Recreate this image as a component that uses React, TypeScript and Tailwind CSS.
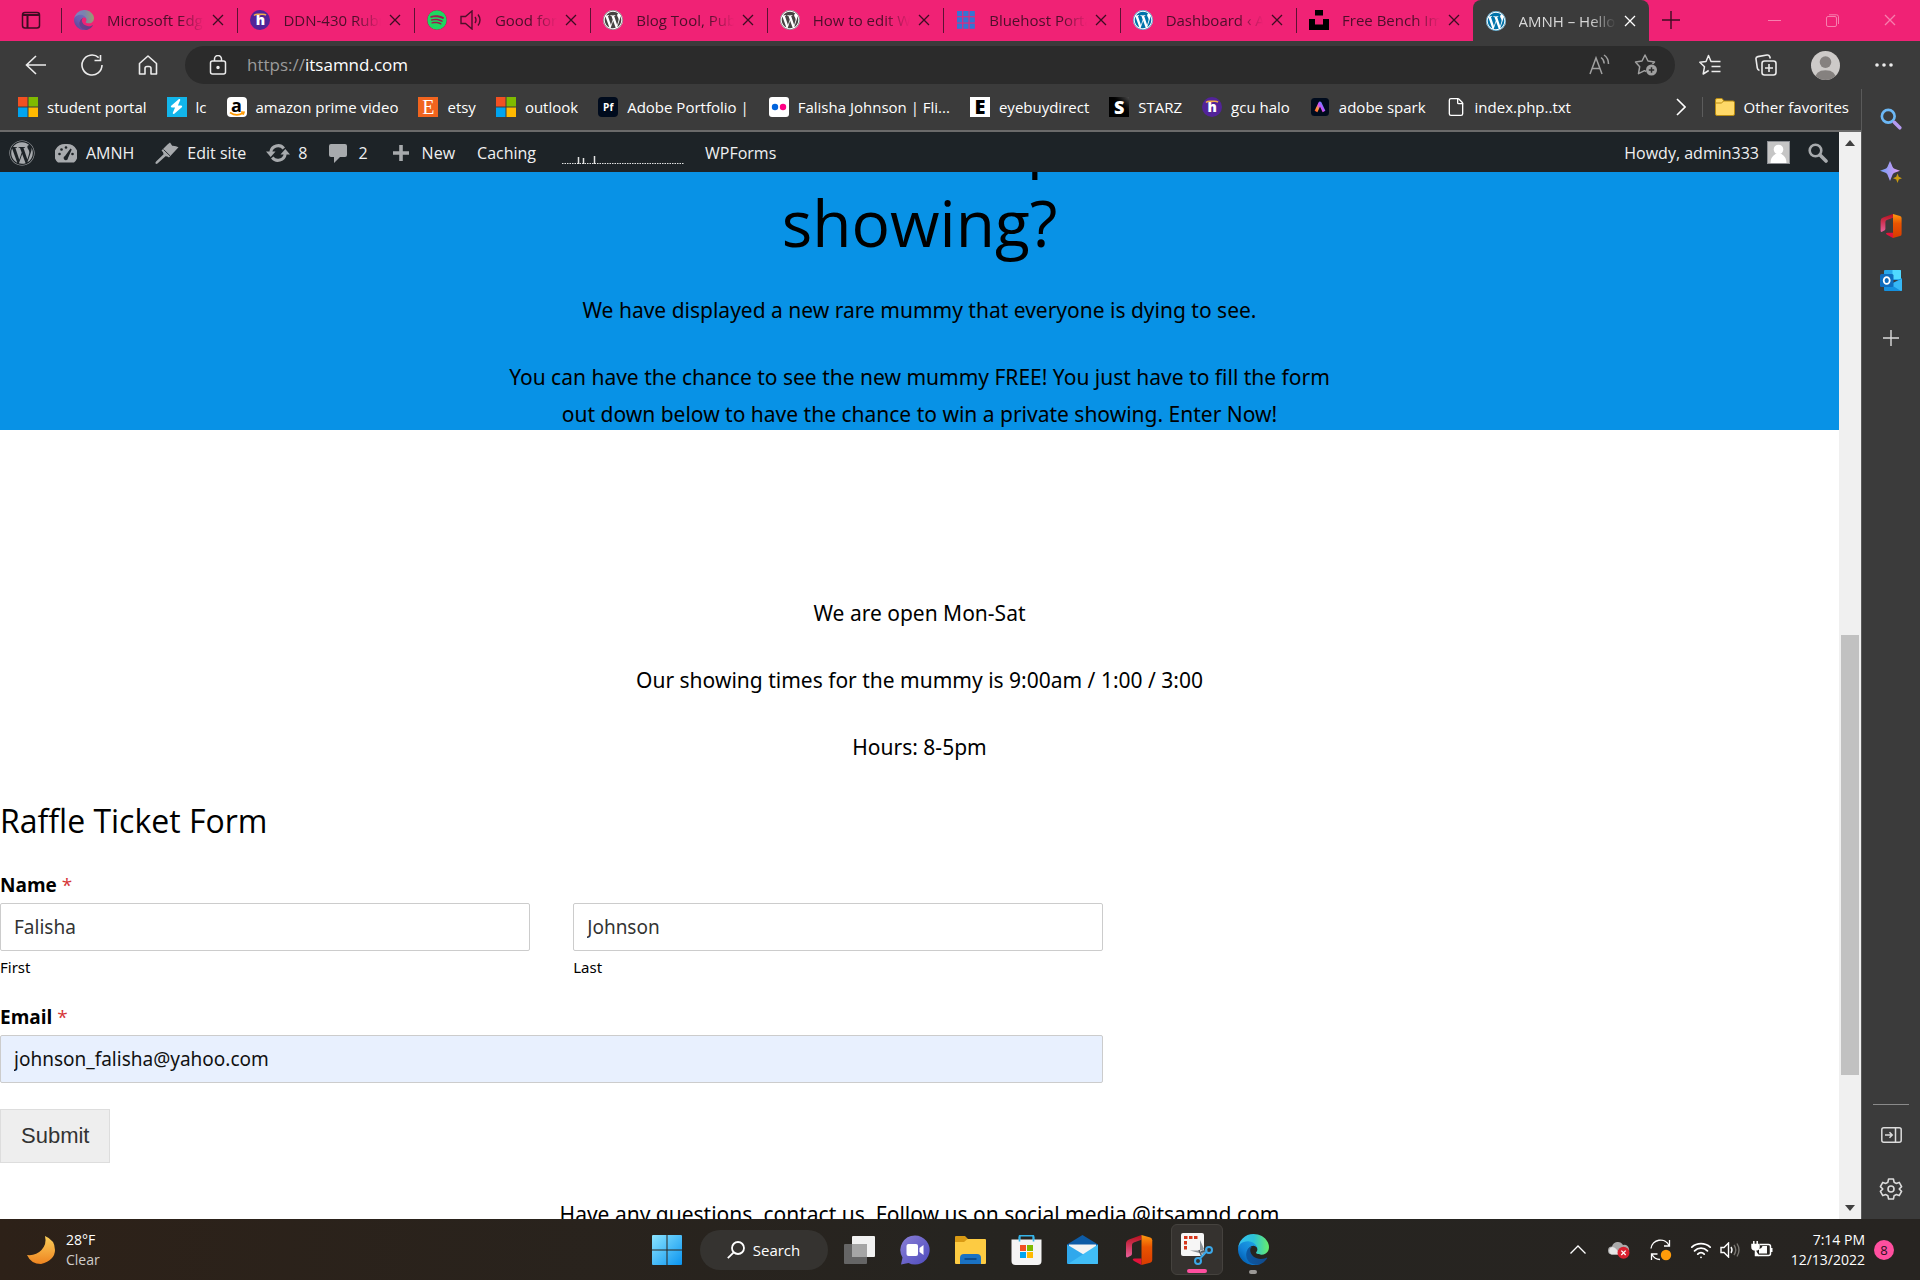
import React, { useState } from 'react';
import { FaWordpress, FaSpotify, FaBolt } from 'react-icons/fa6';
import { Wifi, File } from 'lucide-react';

interface SvgProps {
  className?: string;
}

const CloseIcon = ({ className = '' }: SvgProps) => (
  <svg viewBox="0 0 12 12" className={`w-3 h-3 ${className}`} fill="none" stroke="currentColor" strokeWidth="1.3">
    <path d="M1 1l10 10M11 1L1 11" />
  </svg>
);

const WordPressMark = ({ className = '' }: SvgProps) => (
  <span className={`flex items-center justify-center w-5 h-5 rounded-full bg-white ${className}`}>
    <FaWordpress size={20} />
  </span>
);

const HaloMark = () => (
  <span className="relative flex items-center justify-center w-5 h-5 rounded-full bg-[#522398] text-white text-sm leading-5 font-extrabold">
    h
    <svg viewBox="0 0 20 20" className="absolute inset-0 w-5 h-5" fill="none" stroke="#f0b04a" strokeWidth="1.6">
      <path d="M4 5.5C6 3.6 8 4.4 10 4.4s4-.8 6 .8" />
    </svg>
  </span>
);

const MicrosoftMark = () => (
  <svg viewBox="0 0 20 20" className="w-5 h-5">
    <path d="M0 0h9.5v9.5H0z" fill="#f25022" />
    <path d="M10.5 0H20v9.5h-9.5z" fill="#7fba00" />
    <path d="M0 10.5h9.5V20H0z" fill="#00a4ef" />
    <path d="M10.5 10.5H20V20h-9.5z" fill="#ffb900" />
  </svg>
);

const EdgeMark = ({ className = 'w-8 h-8' }: SvgProps) => (
  <svg viewBox="0 0 256 256" className={className}>
    <defs>
      <linearGradient id="edgeA" x1="60" y1="180" x2="240" y2="180" gradientUnits="userSpaceOnUse">
        <stop offset="0" stopColor="#0c59a4" />
        <stop offset="1" stopColor="#114a8b" />
      </linearGradient>
      <linearGradient id="edgeB" x1="150" y1="95" x2="45" y2="210" gradientUnits="userSpaceOnUse">
        <stop offset="0" stopColor="#1b9de2" />
        <stop offset=".6" stopColor="#1383d8" />
        <stop offset="1" stopColor="#0669bc" />
      </linearGradient>
      <linearGradient id="edgeC" x1="10" y1="90" x2="250" y2="90" gradientUnits="userSpaceOnUse">
        <stop offset="0" stopColor="#35c1f1" />
        <stop offset=".5" stopColor="#2cc2d8" />
        <stop offset="1" stopColor="#66eb6e" />
      </linearGradient>
    </defs>
    <path
      d="M235.7 195.5a93.7 93.7 0 01-10.6 4.7 101.9 101.9 0 01-35.9 6.4c-47.3 0-88.5-32.5-88.5-74.3a31.5 31.5 0 0116.4-27.3c-42.8 1.8-53.8 46.4-53.8 72.5 0 73.9 68.1 81.4 82.8 81.4 7.9 0 19.8-2.3 27-4.6l1.3-.4a128.3 128.3 0 0066.6-52.8 4 4 0 00-5.3-5.6z"
      fill="url(#edgeA)"
    />
    <path
      d="M105.7 241.4a79.2 79.2 0 01-22.7-21.3 80.7 80.7 0 0129.5-120c3.2-1.5 8.5-4.1 15.6-4a32.4 32.4 0 0125.7 13 31.9 31.9 0 016.3 18.7c0-.2 24.5-79.6-80-79.6-43.9 0-80 41.7-80 78.2a130.2 130.2 0 0012.1 56 128 128 0 00156.4 67 75.5 75.5 0 01-62.8-8z"
      fill="url(#edgeB)"
    />
    <path
      d="M152.3 148.9c-.9 1-3.4 2.5-3.4 5.6 0 2.6 1.7 5.2 4.8 7.3 14.3 10 41.4 8.6 41.5 8.6a59.6 59.6 0 0030.3-8.3 61.4 61.4 0 0030.4-52.9c.3-22.4-8-37.3-11.3-43.9C223.5 23.9 177.7 0 128 0A128 128 0 000 126.2c.5-36.5 36.8-66 80-66 3.5 0 23.5.3 42 10a72.6 72.6 0 0130.9 29.3c6.1 10.6 7.2 24.1 7.2 29.5s-2.7 13.3-7.8 19.9z"
      fill="url(#edgeC)"
    />
  </svg>
);

const OfficeMark = ({ className = 'w-6 h-7' }: SvgProps) => (
  <svg viewBox="0 0 22 24" className={className}>
    <defs>
      <linearGradient id="officeL" x1="0" y1="0" x2="0" y2="1">
        <stop offset="0" stopColor="#b80f1c" />
        <stop offset="1" stopColor="#e8609a" />
      </linearGradient>
      <linearGradient id="officeR" x1="0" y1="0" x2="0" y2="1">
        <stop offset="0" stopColor="#ff9a10" />
        <stop offset=".4" stopColor="#ea5400" />
        <stop offset="1" stopColor="#d83b01" />
      </linearGradient>
    </defs>
    <path d="M13 0L3 3.6Q.6 4.6.6 7v9.8q0 1.6 1.4 1l2.4-1.2q1-.5 1-1.8V8q0-1.5 1.4-2L13 3.8z" fill="url(#officeL)" />
    <path d="M13 24l-6-3.3q-2.2-1.8.4-2H13z" fill="#e3123b" />
    <path d="M13 0l7 1.9q1.6.5 1.6 2.2v15.8q0 1.7-1.6 2.2L13 24z" fill="url(#officeR)" />
  </svg>
);

const MagnifierMark = ({ className = '' }: SvgProps) => (
  <svg viewBox="0 0 20 20" className={`w-5 h-5 ${className}`} fill="none" stroke="currentColor">
    <circle cx="7.5" cy="7.5" r="5.8" strokeWidth="2.6" />
    <path d="M12 12l6 6" strokeWidth="3.6" strokeLinecap="round" />
  </svg>
);

interface Tab {
  title: string;
  icon: React.ReactNode;
  audio?: boolean;
  active?: boolean;
}

const tabs: Tab[] = [
  { title: 'Microsoft Edge', icon: <EdgeMark className="w-5 h-5 opacity-60" /> },
  { title: 'DDN-430 Rubric', icon: <HaloMark /> },
  { title: 'Good for you', icon: <FaSpotify size={20} className="text-[#1ed760] bg-[#a01850] rounded-full" />, audio: true },
  { title: 'Blog Tool, Publishing', icon: <WordPressMark className="text-[#464342]" /> },
  { title: 'How to edit WordPress', icon: <WordPressMark className="text-[#464342]" /> },
  {
    title: 'Bluehost Portal',
    icon: (
      <svg viewBox="0 0 20 20" className="w-5 h-5" fill="#3575d3">
        {[1, 7.3, 13.6].map((x) => [1, 7.3, 13.6].map((y) => <rect key={`${x}-${y}`} x={x} y={y} width="5.2" height="5.2" />))}
      </svg>
    ),
  },
  { title: 'Dashboard ‹ AMNH', icon: <WordPressMark className="text-[#0073aa]" /> },
  {
    title: 'Free Bench Images',
    icon: (
      <svg viewBox="0 0 20 20" className="w-5 h-5" fill="#000">
        <path d="M6 0h8v5.6H6zM0 9h6v5.6h8V9h6v11H0z" />
      </svg>
    ),
  },
  { title: 'AMNH – Hello world', icon: <WordPressMark className="text-[#0073aa]" />, active: true },
];

const TabStrip = () => (
  <header className="flex h-[41px] shrink-0 pb-px bg-[#f02275] text-[#4d0f2a]">
    <div className="flex items-center justify-center w-[61px] shrink-0">
      <button aria-label="Tab actions">
        <svg viewBox="0 0 20 20" className="w-5 h-5 text-[#3d0c22]" fill="none" stroke="currentColor" strokeWidth="1.5">
          <rect x="1.5" y="2.5" width="17" height="15.5" rx="2.5" />
          <path d="M1.5 5h17M6.5 6v12" strokeWidth="2" />
        </svg>
      </button>
    </div>
    <nav className="flex flex-1 min-w-0">
      {tabs.map((tab) => (
        <div
          key={tab.title}
          className={`flex flex-1 min-w-0 items-center px-[13px] ${
            tab.active
              ? 'bg-[#3b3b3b] text-[#d8d8d8] rounded-t-lg -mb-px'
              : 'bg-linear-to-b from-[#5c1233] to-[#5c1233] bg-[length:1px_25px] bg-no-repeat bg-left'
          }`}
        >
          <span className="shrink-0">{tab.icon}</span>
          {tab.audio && (
            <svg viewBox="0 0 22 20" className="w-[22px] h-5 ml-[13px] shrink-0" fill="none" stroke="currentColor" strokeWidth="1.4">
              <path d="M1 6.5h4.5L12 1v18l-6.5-5.5H1z" />
              <path d="M15 7q2 3 0 6M18 4.5q4 5.5 0 11" />
            </svg>
          )}
          <a
            href="#tab"
            className="flex-1 min-w-0 ml-[13px] mr-2 overflow-hidden whitespace-nowrap text-[15px] leading-5 [mask-image:linear-gradient(to_right,black_calc(100%-26px),transparent)]"
          >
            {tab.title}
          </a>
          <button aria-label={`Close ${tab.title}`} className="shrink-0">
            <CloseIcon className={tab.active ? 'text-white' : 'text-[#3d0c22]'} />
          </button>
        </div>
      ))}
    </nav>
    <div className="flex items-center justify-between w-[271px] shrink-0 pl-[13px] pr-6">
      <button aria-label="New tab">
        <svg viewBox="0 0 18 18" className="w-[18px] h-[18px] text-[#3d0c22]" fill="none" stroke="currentColor" strokeWidth="1.4">
          <path d="M9 0v18M0 9h18" />
        </svg>
      </button>
      <div className="flex items-center gap-[45px] text-[#f77fae]">
        <button aria-label="Minimize">
          <svg viewBox="0 0 13 13" className="w-[13px] h-[13px]" fill="none" stroke="currentColor">
            <path d="M0 6.5h13" />
          </svg>
        </button>
        <button aria-label="Restore">
          <svg viewBox="0 0 13 13" className="w-[13px] h-[13px]" fill="none" stroke="currentColor">
            <rect x=".5" y="2.5" width="10" height="10" rx="1.5" />
            <path d="M3 .8h7.5q2 0 2 2V10" />
          </svg>
        </button>
        <button aria-label="Close window">
          <CloseIcon />
        </button>
      </div>
    </div>
  </header>
);

const Toolbar = () => (
  <div className="flex items-center h-12 shrink-0 bg-[#3b3b3b] text-[#ececec]">
    <div className="flex items-center justify-between w-[185px] shrink-0 pl-[25px] pr-[26px]">
      <button aria-label="Back">
        <svg viewBox="0 0 22 22" className="w-[22px] h-[22px]" fill="none" stroke="currentColor" strokeWidth="1.6">
          <path d="M11 2l-9.500 9 9.500 9M1.500 11H21" />
        </svg>
      </button>
      <button aria-label="Refresh">
        <svg viewBox="0 0 22 22" className="w-[22px] h-[22px]" fill="none" stroke="currentColor" strokeWidth="1.6">
          <path d="M21 11a10 10 0 11-3.300-7.400M19.500 1v5.500h-6" />
        </svg>
      </button>
      <button aria-label="Home">
        <svg viewBox="0 0 22 22" className="w-[22px] h-[22px]" fill="none" stroke="currentColor" strokeWidth="1.6" strokeLinejoin="round">
          <path d="M2.500 9.500L11 2l8.500 7.500V20H14v-5.500a2 2 0 00-2-2h-2a2 2 0 00-2 2V20H2.500z" />
        </svg>
      </button>
    </div>
    <div className="flex flex-1 items-center min-w-0 h-[38px] rounded-full bg-[#2b2b2b] pl-6 pr-[17px]">
      <svg viewBox="0 0 18 20" className="w-[18px] h-5 shrink-0" fill="none" stroke="currentColor" strokeWidth="1.5">
        <rect x="1.5" y="6" width="15" height="13" rx="2" />
        <path d="M5.500 6V4a3.500 3.500 0 017 0v2" />
        <circle cx="9" cy="12.5" r="1" fill="currentColor" />
      </svg>
      <a href="https://itsamnd.com" className="flex-1 pl-5 text-[17px] leading-6 text-white">
        <span className="text-[#9b9b9b]">https://</span>itsamnd.com
      </a>
      <div className="flex items-center gap-6 text-[#a0a0a0]">
        <button aria-label="Read aloud">
          <svg viewBox="0 0 22 22" className="w-[22px] h-[22px]" fill="none" stroke="currentColor" strokeWidth="1.5">
            <path d="M2 20L8 4l6 16M4.200 14.500h7.600M13 3.500q3 2 3.200 6M16 1q4.500 3 4.500 9" />
          </svg>
        </button>
        <button aria-label="Add to favorites">
          <svg viewBox="0 0 24 24" className="w-6 h-6" fill="none" stroke="currentColor" strokeWidth="1.5" strokeLinejoin="round">
            <path d="M12 18.500l-1.500-.8-6 3 1.200-7L1.500 9l6.500-1 3-6 3 6 6.500 1-2 2" />
            <circle cx="17.500" cy="17" r="5.500" fill="currentColor" stroke="none" />
            <path d="M17.500 14.300v5.400M14.800 17h5.400" stroke="#2b2b2b" />
          </svg>
        </button>
      </div>
    </div>
    <div className="flex items-center justify-between w-[245px] shrink-0 pl-6 pr-[26px]">
      <button aria-label="Favorites">
        <svg viewBox="0 0 22 22" className="w-[22px] h-[22px]" fill="none" stroke="currentColor" strokeWidth="1.5" strokeLinejoin="round">
          <path d="M13 7.500h-1L9.500 1.500 7 7.500.8 8.200l4.700 4.500L4.200 20l5.500-3.500M13 7.500h8.500M12.500 12.500h9M12.500 17.500h9" />
        </svg>
      </button>
      <button aria-label="Collections">
        <svg viewBox="0 0 22 22" className="w-[22px] h-[22px]" fill="none" stroke="currentColor" strokeWidth="1.6">
          <rect x="7" y="7" width="14" height="14" rx="2.5" />
          <path d="M14 10v8M10 14h8M4.500 16.500q-1.800-.5-2.200-2.500L1 5q-.3-2 1.800-2.400L12 1q2-.3 2.700 1.600l.6 2" />
        </svg>
      </button>
      <button aria-label="Profile" className="rounded-full overflow-hidden">
        <svg viewBox="0 0 30 30" className="w-[29px] h-[29px]">
          <rect width="30" height="30" fill="#cdcac8" />
          <circle cx="15" cy="11.5" r="6" fill="#85817f" />
          <path d="M4 30q0-10 11-10t11 10z" fill="#85817f" />
        </svg>
      </button>
      <button aria-label="Settings and more">
        <svg viewBox="0 0 20 4" className="w-5 h-1" fill="currentColor">
          <circle cx="3" cy="2" r="1.8" />
          <circle cx="10" cy="2" r="1.8" />
          <circle cx="17" cy="2" r="1.8" />
        </svg>
      </button>
    </div>
  </div>
);

const favorites = [
  { label: 'student portal', icon: <MicrosoftMark /> },
  { label: 'lc', icon: <span className="flex items-center justify-center w-5 h-5 bg-[#12b5ea] text-white"><FaBolt size={15} /></span> },
  {
    label: 'amazon prime video',
    icon: (
      <span className="relative flex items-center justify-center w-5 h-5 rounded-sm bg-white text-black font-bold text-lg leading-4 pb-1">
        a
        <svg viewBox="0 0 20 20" className="absolute inset-0 w-5 h-5" fill="none" stroke="#f90" strokeWidth="1.6">
          <path d="M3 15.500q6.500 4.500 13 .5M14 15l3 .2-.8 2.600" />
        </svg>
      </span>
    ),
  },
  { label: 'etsy', icon: <span className="flex items-center justify-center w-5 h-5 bg-[#f1641e] text-white font-['Liberation_Serif',serif] text-xl leading-5">E</span> },
  { label: 'outlook', icon: <MicrosoftMark /> },
  { label: 'Adobe Portfolio |', icon: <span className="flex items-center justify-center w-5 h-5 rounded bg-[#000b1d] text-white font-bold text-[10px] leading-5">Pf</span> },
  {
    label: 'Falisha Johnson | Fli...',
    icon: (
      <svg viewBox="0 0 20 20" className="w-5 h-5">
        <rect width="20" height="20" rx="3" fill="#fff" />
        <circle cx="6" cy="10" r="3.2" fill="#0063dc" />
        <circle cx="14" cy="10" r="3.2" fill="#ff0084" />
      </svg>
    ),
  },
  { label: 'eyebuydirect', icon: <span className="flex items-center justify-center w-5 h-5 bg-white text-black font-extrabold text-xl leading-5">E</span> },
  { label: 'STARZ', icon: <span className="flex items-center justify-center w-5 h-5 bg-linear-to-bl from-[#4a4a4a] to-black to-50% text-white font-extrabold text-lg leading-5">S</span> },
  { label: 'gcu halo', icon: <HaloMark /> },
  {
    label: 'adobe spark',
    icon: (
      <svg viewBox="0 0 20 20" className="w-5 h-5">
        <defs>
          <linearGradient id="spark" x1="5" y1="15" x2="15" y2="8" gradientUnits="userSpaceOnUse">
            <stop offset="0" stopColor="#ff3d3d" />
            <stop offset=".3" stopColor="#ff9d2e" />
            <stop offset=".6" stopColor="#d04bff" />
            <stop offset="1" stopColor="#3a9bff" />
          </linearGradient>
        </defs>
        <rect x="1" y="1" width="18" height="18" rx="3.5" fill="#000b1d" />
        <path d="M6 14.500L10 6l4 8.500" fill="none" stroke="url(#spark)" strokeWidth="3" strokeLinejoin="round" />
      </svg>
    ),
  },
  { label: 'index.php..txt', icon: <File size={20} strokeWidth={1.6} /> },
];

const FavoritesBar = () => (
  <div className="flex items-center justify-between h-[43px] shrink-0 pl-[18px] pr-3 pb-[6px] border-b-2 border-[#6a6a6a] bg-[#3b3b3b] text-[15px] leading-5 text-white">
    <div className="flex items-center gap-5">
      {favorites.map((fav) => (
        <a key={fav.label} href="#favorite" className="flex items-center gap-[9px] whitespace-nowrap">
          {fav.icon}
          {fav.label}
        </a>
      ))}
    </div>
    <div className="flex items-center">
      <button aria-label="More favorites">
        <svg viewBox="0 0 10 18" className="w-[10px] h-[18px]" fill="none" stroke="currentColor" strokeWidth="1.6">
          <path d="M1 1l8 8-8 8" />
        </svg>
      </button>
      <span className="w-px h-5 ml-4 mr-3 bg-[#5c5c5c]" />
      <a href="#other" className="flex items-center gap-[9px] whitespace-nowrap">
        <svg viewBox="0 0 20 20" className="w-5 h-5" stroke="#b98c12">
          <path d="M.5 3q0-1.500 1.500-1.500h5l2 2.500h9q1.500 0 1.500 1.500V17q0 1.500-1.500 1.500H2Q.5 18.500.5 17z" fill="#ffd968" />
          <path d="M.5 6h5.800L9 3.800" fill="none" />
        </svg>
        Other favorites
      </a>
    </div>
  </div>
);

const AdminBar = () => (
  <div className="flex items-center justify-between h-10 shrink-0 pt-px pl-[9px] pr-[11px] bg-[#1d2327] text-[#f0f0f1] text-base leading-6 whitespace-nowrap">
    <div className="flex items-center">
      <a href="#about" aria-label="About WordPress" className="text-[#a7aaad]">
        <FaWordpress size={26} />
      </a>
      <a href="#site" className="flex items-center gap-[9px] ml-5">
        <svg viewBox="0 0 22 20" className="w-[22px] h-5">
          <path d="M3 19.500A10.500 10.500 0 0111 1a10.500 10.500 0 018 18.500z" fill="#a7aaad" />
          <g fill="#1d2327">
            <circle cx="4.5" cy="11" r="1.3" />
            <circle cx="6.5" cy="6.5" r="1.3" />
            <circle cx="11" cy="4.5" r="1.3" />
            <circle cx="17.5" cy="11" r="1.3" />
            <path d="M15.500 5.500l1.200 1-3.700 8.500a2.200 2.200 0 11-3-2z" />
          </g>
        </svg>
        AMNH
      </a>
      <a href="#edit" className="flex items-center gap-2 ml-[21px]">
        <svg viewBox="0 0 24 22" className="w-6 h-[22px]" fill="#a7aaad">
          <path d="M12.500 2.500l2.500-2 2.200 3.200q3.600-.2 6.300 1.600L14 15.500q-2.300-1.500-3.500-1.200L2.500 21.500q-1.500 1-2-.2-.3-.8.6-1.700l7.500-7.400Q8.500 10 6.500 8.500z" />
          <path d="M8.500 7.500l6.500 6.300" stroke="#1d2327" strokeWidth=".9" />
        </svg>
        Edit site
      </a>
      <a href="#updates" className="flex items-center gap-2 ml-5">
        <svg viewBox="0 0 24 20" className="w-6 h-5" fill="none" stroke="#a7aaad" strokeWidth="3">
          <path d="M4.800 9a7.300 7.300 0 0113-3.500M19.200 11a7.300 7.300 0 01-13 3.500" />
          <path d="M0 8.500h9.500L4.700 14zM24 11.500h-9.500L19.300 6z" fill="#a7aaad" stroke="none" />
        </svg>
        8
      </a>
      <a href="#comments" className="flex items-center gap-[10px] ml-[21px]">
        <svg viewBox="0 0 20 20" className="w-5 h-5" fill="#a7aaad">
          <path d="M3 1h14q2 0 2 2v9q0 2-2 2h-5l-6 6v-6H3q-2 0-2-2V3q0-2 2-2z" />
        </svg>
        2
      </a>
      <a href="#new" className="flex items-center gap-3 ml-6">
        <svg viewBox="0 0 18 18" className="w-[18px] h-[18px]" stroke="#a7aaad" strokeWidth="3.6">
          <path d="M9 1v16M1 9h16" />
        </svg>
        New
      </a>
      <a href="#caching" className="ml-[22px]">Caching</a>
      <svg viewBox="0 0 122 24" className="w-[122px] h-6 ml-[26px]" fill="none" stroke="#e4e4e4">
        <path d="M0 22.500h122" strokeDasharray="1.5 1" />
        <path d="M16.500 23v-7M21.500 23v-6M32.500 23v-8" strokeWidth="1.5" />
      </svg>
      <a href="#wpforms" className="ml-[21px]">WPForms</a>
    </div>
    <div className="flex items-center">
      <a href="#profile" className="flex items-center gap-2">
        Howdy, admin333
        <svg viewBox="0 0 23 23" className="w-[23px] h-[23px]">
          <rect x=".5" y=".5" width="22" height="22" fill="#c5c5c5" stroke="#8c8f94" />
          <circle cx="11.5" cy="8.5" r="4.8" fill="#fff" />
          <path d="M3.500 22q0-6 5-9h6q5 3 5 9z" fill="#fff" />
        </svg>
      </a>
      <button aria-label="Search" className="ml-[18px] text-[#a7aaad]">
        <MagnifierMark />
      </button>
    </div>
  </div>
);

const inputClass = 'block w-full h-12 px-[13px] border border-[#cccccc] rounded-xs text-[19px] leading-6 outline-none';

const RaffleForm = () => {
  const [first, setFirst] = useState('Falisha');
  const [last, setLast] = useState('Johnson');
  const [email, setEmail] = useState('johnson_falisha@yahoo.com');

  return (
    <form className="w-3/5 mt-[33px]" onSubmit={(e) => e.preventDefault()}>
      <h2 className="text-[32px] leading-[44px] font-['Open_Sans',sans-serif]">Raffle Ticket Form</h2>

      <fieldset className="mt-7">
        <legend className="mb-1 text-[19px] leading-7 font-bold font-['Open_Sans',sans-serif]">
          Name <span className="font-normal text-[#d63638]">*</span>
        </legend>
        <div className="flex gap-[43px]">
          <div className="flex-1">
            <input id="first" className={`${inputClass} text-[#333333]`} value={first} onChange={(e) => setFirst(e.target.value)} />
            <label htmlFor="first" className="block mt-1 text-[15px] leading-6">First</label>
          </div>
          <div className="flex-1">
            <input id="last" className={`${inputClass} text-[#333333]`} value={last} onChange={(e) => setLast(e.target.value)} />
            <label htmlFor="last" className="block mt-1 text-[15px] leading-6">Last</label>
          </div>
        </div>
      </fieldset>

      <label htmlFor="email" className="block mt-6 mb-1 text-[19px] leading-7 font-bold font-['Open_Sans',sans-serif]">
        Email <span className="font-normal text-[#d63638]">*</span>
      </label>
      <input
        id="email"
        type="email"
        className={`${inputClass} bg-[#e8f0fe] text-[#111111]`}
        value={email}
        onChange={(e) => setEmail(e.target.value)}
      />

      <button
        type="submit"
        className="mt-[26px] px-5 h-[54px] border border-[#dddddd] bg-[#eeeeee] text-[#333333] text-[22px] leading-6 font-['Liberation_Sans',sans-serif]"
      >
        Submit
      </button>
    </form>
  );
};

const SitePage = () => (
  <main className="flex-1 min-h-0 overflow-hidden bg-white text-black text-[21px] leading-[37px] font-['Noto_Sans',sans-serif]">
    <section className="flex flex-col items-center h-[258px] overflow-hidden bg-[#0892e6] text-center">
      <h1 className="-mt-[72px] max-w-[850px] text-[64px] leading-[82px] font-['Open_Sans',sans-serif]">
        Want to see a private showing?
      </h1>
      <p className="mt-7">We have displayed a new rare mummy that everyone is dying to see.</p>
      <p className="mt-[30px] max-w-[850px]">
        You can have the chance to see the new mummy FREE! You just have to fill the form out down below to have the
        chance to win a private showing. Enter Now!
      </p>
    </section>

    <section className="flex flex-col gap-[30px] pt-[165px] text-center">
      <p>We are open Mon-Sat</p>
      <p>Our showing times for the mummy is 9:00am / 1:00 / 3:00</p>
      <p>Hours: 8-5pm</p>
    </section>

    <RaffleForm />

    <p className="mt-[33px] text-center">Have any questions, contact us. Follow us on social media @itsamnd.com</p>
  </main>
);

const ScrollBar = () => (
  <div className="flex flex-col items-center w-[22px] shrink-0 bg-[#f0f0f0]">
    <svg viewBox="0 0 10 6" className="w-[10px] h-[6px] my-2" fill="#404040">
      <path d="M5 0l5 6H0z" />
    </svg>
    <div className="flex-[481]" />
    <div className="flex-[440] w-[18px] bg-[#c1c1c1]" />
    <div className="flex-[122]" />
    <svg viewBox="0 0 10 6" className="w-[10px] h-[6px] my-2" fill="#404040">
      <path d="M5 6l5-6H0z" />
    </svg>
  </div>
);

const EdgeSidebar = () => (
  <aside className="flex flex-col items-center justify-between w-[59px] shrink-0 pt-[19px] pb-[18px] border-l border-[#5a5a5a] bg-[#3b3b3b] text-[#dcdcdc]">
    <div className="flex flex-col items-center gap-[31px]">
      <button aria-label="Search">
        <svg viewBox="0 0 20 20" className="w-[22px] h-[22px]" fill="none">
          <circle cx="7.5" cy="7.5" r="5.8" stroke="#6cb8f6" strokeWidth="2.4" />
          <path d="M13 13l5 5" stroke="#b49af0" strokeWidth="3.2" strokeLinecap="round" />
        </svg>
      </button>
      <button aria-label="Discover">
        <svg viewBox="0 0 22 22" className="w-[22px] h-[22px]">
          <defs>
            <linearGradient id="discover" x1="0" y1="0" x2="1" y2="0">
              <stop offset="0" stopColor="#6f9df5" />
              <stop offset="1" stopColor="#e29cf5" />
            </linearGradient>
          </defs>
          <path d="M10 0q1.500 3 2.500 5.800 .6 1.400 2 2L20 9.800l-5.500 2q-1.400.6-2 2L10 20l-2.500-6.200q-.6-1.400-2-2L0 9.800l5.500-2q1.400-.6 2-2z" fill="url(#discover)" />
          <path d="M17.500 12.500l1.300 3.300 3.200 1.400-3.200 1.300-1.300 3.500-1.300-3.500-3.200-1.300 3.200-1.400z" fill="#c99a10" />
        </svg>
      </button>
      <button aria-label="Office">
        <OfficeMark className="w-[22px] h-6" />
      </button>
      <button aria-label="Outlook">
        <svg viewBox="0 0 22 22" className="w-[22px] h-[22px]">
          <path d="M5 1h15q1 0 1 1v9H4V2q0-1 1-1z" fill="#28a8ea" />
          <path d="M12.500 1H20q1 0 1 1v8h-8.500z" fill="#50d9ff" />
          <path d="M4 9l9 5 9-5v12q0 1-1 1H5q-1 0-1-1z" fill="#1490df" />
          <path d="M22 10v11q0 1-1 1L9 14.500l4-.5z" fill="#36b7f5" />
          <rect y="5" width="13.5" height="13" rx="1.5" fill="#0f6cbd" />
          <ellipse cx="6.7" cy="11.5" rx="3" ry="3.4" fill="none" stroke="#fff" strokeWidth="1.8" />
        </svg>
      </button>
      <button aria-label="Add app" className="mt-2">
        <svg viewBox="0 0 16 16" className="w-4 h-4" stroke="currentColor" strokeWidth="1.4">
          <path d="M8 0v16M0 8h16" />
        </svg>
      </button>
    </div>
    <div className="flex flex-col items-center">
      <span className="w-9 h-px bg-[#8a8a8a]" />
      <button aria-label="Hide sidebar" className="mt-[22px]">
        <svg viewBox="0 0 21 16" className="w-[21px] h-4" fill="none" stroke="currentColor" strokeWidth="1.5">
          <rect x=".8" y=".8" width="19.4" height="14.4" rx="2" />
          <path d="M14.500 1v14M4 8h7M8.500 5.200L11.200 8l-2.700 2.800" />
        </svg>
      </button>
      <button aria-label="Settings" className="mt-[34px]">
        <svg viewBox="0 0 24 24" className="w-6 h-6" fill="none" stroke="currentColor" strokeWidth="1.6" strokeLinejoin="round">
          <path d="M9.600 2h4.800l.7 3.200 2 1.200 3.100-1 2.400 4.200L20.200 12l2.400 2.400-2.400 4.200-3.100-1-2 1.200-.7 3.200H9.600l-.7-3.200-2-1.200-3.100 1-2.400-4.200L3.800 12 1.400 9.600l2.400-4.200 3.100 1 2-1.200z" />
          <circle cx="12" cy="12" r="3" />
        </svg>
      </button>
    </div>
  </aside>
);

const Taskbar = () => (
  <footer className="grid grid-cols-[1fr_auto_1fr] items-center h-[61px] shrink-0 bg-linear-to-r from-[#2d2118] via-[#262420] to-[#272421] text-white text-[14px] leading-5">
    <div className="flex items-center gap-[11px] pl-[27px]">
      <svg viewBox="0 0 28 28" className="w-7 h-7">
        <defs>
          <linearGradient id="moon" x1="0" y1="0" x2="0" y2="1">
            <stop offset="0" stopColor="#fbcf5a" />
            <stop offset="1" stopColor="#ee8420" />
          </linearGradient>
        </defs>
        <path d="M18 0Q28 4 28 14T14 28Q4 28 0 19q9 1 14.500-5T18 0z" fill="url(#moon)" />
      </svg>
      <div>
        <p>28°F</p>
        <p className="text-[#d0cdca]">Clear</p>
      </div>
    </div>

    <div className="flex items-center">
      <button aria-label="Start">
        <svg viewBox="0 0 30 30" className="w-[30px] h-[30px]">
          <defs>
            <linearGradient id="start" x1="0" y1="0" x2="1" y2="1">
              <stop offset="0" stopColor="#8be4ff" />
              <stop offset="1" stopColor="#0a94f0" />
            </linearGradient>
          </defs>
          <path d="M1 0h13.500v14.500H0V1q0-1 1-1zM15.500 0H29q1 0 1 1v13.500H15.500zM0 15.500h14.500V30H1q-1 0-1-1zM15.500 15.500H30V29q0 1-1 1H15.500z" fill="url(#start)" />
        </svg>
      </button>
      <button className="flex items-center justify-center gap-2 w-32 h-10 ml-[18px] rounded-full bg-[#353330] text-[15px]">
        <svg viewBox="0 0 18 18" className="w-[18px] h-[18px]" fill="none" stroke="currentColor" strokeWidth="1.8">
          <circle cx="11" cy="7" r="6" />
          <path d="M6.700 11.300L.8 17.200" />
        </svg>
        Search
      </button>
      <div className="flex items-center gap-[25px] ml-4">
        <button aria-label="Task view">
          <svg viewBox="0 0 31 30" className="w-[31px] h-[30px]">
            <rect x="8" y="1" width="23" height="21" rx="1" fill="#f1f1f1" />
            <rect y="9" width="23" height="20" rx="1" fill="#6d6d6d" fillOpacity=".9" />
            <path d="M8 9h15v13H8z" fill="#a5a5a5" />
          </svg>
        </button>
        <button aria-label="Chat">
          <svg viewBox="0 0 30 30" className="w-[30px] h-[30px]">
            <defs>
              <linearGradient id="chat" x1="0" y1="0" x2="1" y2="1">
                <stop offset="0" stopColor="#8a7fd6" />
                <stop offset="1" stopColor="#4e4bbd" />
              </linearGradient>
            </defs>
            <path d="M15 .5a14.500 14.500 0 11-6.500 27.400L1 29.500l1.500-7A14.500 14.500 0 0115 .5z" fill="url(#chat)" />
            <rect x="6.5" y="9" width="11.5" height="12" rx="2" fill="#fff" />
            <path d="M19.500 13l4-3v10l-4-3z" fill="#fff" />
          </svg>
        </button>
        <button aria-label="File Explorer">
          <svg viewBox="0 0 31 28" className="w-[31px] h-7">
            <path d="M1 0h9l3 3-3 4H0V1q0-1 1-1z" fill="#d99a14" />
            <path d="M12.500 3H30q1 0 1 1v23q0 1-1 1H1q-1 0-1-1V6h9z" fill="#fdcb42" />
            <path d="M5 28v-6q0-4 4-4h13q4 0 4 4v6z" fill="#1a72c4" />
            <path d="M9.500 23h12" stroke="#0c4c8e" strokeWidth="2" />
          </svg>
        </button>
        <button aria-label="Microsoft Store">
          <svg viewBox="0 0 31 30" className="w-[31px] h-[30px]">
            <path d="M8.500 6V2q0-1.500 1.500-1.500h11q1.500 0 1.500 1.500v4" fill="none" stroke="#36b4e8" strokeWidth="2" />
            <path d="M.5 4.500h30V26q0 4-4 4h-22q-4 0-4-4z" fill="#f4f4f4" />
            <path d="M8.500 6.500V2M22.500 6.500V2" stroke="#36b4e8" strokeWidth="1.6" />
            <path d="M9 10h6v6H9z" fill="#f25022" />
            <path d="M16 10h6v6h-6z" fill="#7fba00" />
            <path d="M9 17h6v6H9z" fill="#00a4ef" />
            <path d="M16 17h6v6h-6z" fill="#ffb900" />
          </svg>
        </button>
        <button aria-label="Mail">
          <svg viewBox="0 0 31 29" className="w-[31px] h-[29px]">
            <path d="M0 9.500L15.500 0 31 9.500V20H0z" fill="#0d5ba6" />
            <path d="M2 9.500h27v8l-13 6-14-6z" fill="#f4f4f4" />
            <path d="M0 9.500L19 21l12 7.500q0 .5-1 .5H1q-1 0-1-1z" fill="#2fa8ec" />
            <path d="M31 9.500V28q0 1-1 1H1z" fill="#41bdf6" />
          </svg>
        </button>
        <button aria-label="Office">
          <OfficeMark className="w-8 h-[30px]" />
        </button>
      </div>
      <button aria-label="Snipping Tool" className="flex flex-col items-center justify-end w-[52px] h-[51px] ml-4 rounded-md border border-[#45423e] bg-[#35322f]">
        <svg viewBox="0 0 32 32" className="w-8 h-8">
          <rect width="23" height="23" rx="2" fill="#f6f6f6" />
          <path d="M3 4.500h14M4.500 8v9" stroke="#d6361c" strokeWidth="3" strokeDasharray="3.5 1.5" />
          <path d="M19 7v13l4-4zM9 17.500h15v4z" fill="#8d9399" />
          <path d="M18 17l3 7M20 19l7-2" stroke="#555b60" strokeWidth="1.5" />
          <circle cx="28" cy="17" r="3" fill="none" stroke="#3ba7e8" strokeWidth="2" />
          <circle cx="17" cy="28" r="3" fill="none" stroke="#3ba7e8" strokeWidth="2" />
          <path d="M19 25.500l6-6.500" stroke="#3ba7e8" strokeWidth="2" />
        </svg>
        <span className="w-5 h-1 mt-1 mb-px rounded-full bg-[#ff4f9f]" />
      </button>
      <button aria-label="Microsoft Edge" className="flex flex-col items-center justify-end h-[51px] ml-[15px]">
        <EdgeMark className="w-[31px] h-[31px]" />
        <span className="w-2 h-1 mt-[5px] mb-px rounded-full bg-[#9b9996]" />
      </button>
    </div>

    <div className="flex items-center justify-end pr-[26px]">
      <button aria-label="Show hidden icons">
        <svg viewBox="0 0 16 9" className="w-4 h-[9px]" fill="none" stroke="currentColor" strokeWidth="1.3">
          <path d="M.5 8.500L8 1l7.500 7.500" />
        </svg>
      </button>
      <svg viewBox="0 0 22 18" className="w-[22px] h-[18px] ml-[22px]">
        <path d="M4 13.500a4 4 0 010-8 6 6 0 0111-1.500 5 5 0 013 9.500z" fill="#aaa" />
        <path d="M3.500 13.500a4 4 0 01.5-7.500q5 0 7 7.500z" fill="#e6e6e6" />
        <circle cx="15.5" cy="11.8" r="6" fill="#d9202f" />
        <path d="M13.300 9.600l4.400 4.400M17.700 9.600l-4.400 4.400" stroke="#fff" strokeWidth="1.3" />
      </svg>
      <svg viewBox="0 0 22 22" className="w-[22px] h-[22px] ml-5" fill="none" stroke="currentColor" strokeWidth="1.3">
        <path d="M1 9.500a9.500 9.500 0 0118-3M19.500 1v6H14M1.500 21v-6h6M2 15.500a9.500 9.500 0 008 5" />
        <circle cx="16" cy="16" r="5.2" fill="#ff9c0a" stroke="none" />
      </svg>
      <Wifi size={22} strokeWidth={2} className="ml-[18px]" />
      <svg viewBox="0 0 20 16" className="w-5 h-4 ml-2" fill="none" stroke="currentColor" strokeWidth="1.4">
        <path d="M1 5.500h3L8.500 1v14L4 10.500H1z" />
        <path d="M11 5q2 3 0 6" />
        <path d="M14 3q3.500 5 0 10M17 1.500q4 6.500 0 13" stroke="#77746f" />
      </svg>
      <svg viewBox="0 0 22 17" className="w-[22px] h-[17px] ml-[11px]" fill="none" stroke="currentColor" strokeWidth="1.5">
        <path d="M9 3.500h8.500q2 0 2 2v7q0 2-2 2H7.500" />
        <path d="M20.500 7v4" strokeWidth="2" />
        <path d="M8 12.500V8q3-.5 3.500-3H16v7.500z" fill="currentColor" stroke="none" />
        <path d="M1 3.500h7V6q0 3-3.500 3T1 6zM2.800 0v4M6.200 0v4M4.500 9v5.500H8" fill="currentColor" />
      </svg>
      <div className="ml-[18px] text-right">
        <p>7:14 PM</p>
        <p>12/13/2022</p>
      </div>
      <span className="flex items-center justify-center w-5 h-5 ml-[9px] rounded-full bg-[#ff4f9f] text-[#2b1020] text-[13px]">8</span>
    </div>
  </footer>
);

export default function App() {
  return (
    <div className="flex flex-col h-screen overflow-hidden font-['Open_Sans','Noto_Sans',sans-serif]">
      <TabStrip />
      <Toolbar />
      <div className="flex flex-1 min-h-0">
        <div className="flex flex-col flex-1 min-w-0">
          <FavoritesBar />
          <div className="flex flex-1 min-h-0">
            <div className="flex flex-col flex-1 min-w-0">
              <AdminBar />
              <SitePage />
            </div>
            <ScrollBar />
          </div>
        </div>
        <EdgeSidebar />
      </div>
      <Taskbar />
    </div>
  );
}
